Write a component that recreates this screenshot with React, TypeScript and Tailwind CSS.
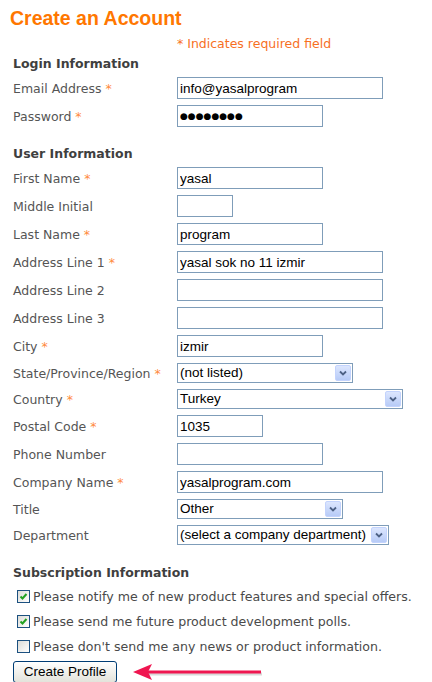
import React from 'react';

const labelFont = { fontFamily: '"DejaVu Sans", Verdana, sans-serif' };
const inputFont = { fontFamily: '"Liberation Sans", Arial, sans-serif' };

type Row =
  | { kind: 'input'; label: string; req?: boolean; value?: string; width: string; password?: boolean }
  | { kind: 'select'; label: string; req?: boolean; value: string; width: string };

const loginRows: Row[] = [
  { kind: 'input', label: 'Email Address', req: true, value: 'info@yasalprogram', width: 'w-[206px]' },
  { kind: 'input', label: 'Password', req: true, value: '●●●●●●●●', width: 'w-[146px]', password: true },
];

const userRows: Row[] = [
  { kind: 'input', label: 'First Name', req: true, value: 'yasal', width: 'w-[146px]' },
  { kind: 'input', label: 'Middle Initial', value: '', width: 'w-[56px]' },
  { kind: 'input', label: 'Last Name', req: true, value: 'program', width: 'w-[146px]' },
  { kind: 'input', label: 'Address Line 1', req: true, value: 'yasal sok no 11 izmir', width: 'w-[206px]' },
  { kind: 'input', label: 'Address Line 2', value: '', width: 'w-[206px]' },
  { kind: 'input', label: 'Address Line 3', value: '', width: 'w-[206px]' },
  { kind: 'input', label: 'City', req: true, value: 'izmir', width: 'w-[146px]' },
  { kind: 'select', label: 'State/Province/Region', req: true, value: '(not listed)', width: 'w-[176px]' },
  { kind: 'select', label: 'Country', req: true, value: 'Turkey', width: 'w-[226px]' },
  { kind: 'input', label: 'Postal Code', req: true, value: '1035', width: 'w-[86px]' },
  { kind: 'input', label: 'Phone Number', value: '', width: 'w-[146px]' },
  { kind: 'input', label: 'Company Name', req: true, value: 'yasalprogram.com', width: 'w-[206px]' },
  { kind: 'select', label: 'Title', value: 'Other', width: 'w-[166px]' },
  { kind: 'select', label: 'Department', value: '(select a company department)', width: 'w-[212px]' },
];

function Label({ text, req }: { text: string; req?: boolean }) {
  return (
    <div className="w-[164px] shrink-0 pt-[1px] text-[12.5px] leading-[18px] text-[#555555]" style={labelFont}>
      {text}
      {req && <span className="text-[#ff8a3d]"> *</span>}
    </div>
  );
}

function Chevron() {
  return (
    <div className="absolute right-[1px] top-[1px] bottom-[1px] w-[16px] rounded-[2px] border border-[#c3d3fd] bg-gradient-to-b from-[#dce6fe] to-[#b7cbf7] flex items-center justify-center">
      <svg width="8" height="6" viewBox="0 0 8 6">
        <path d="M1 1.5 L4 4.5 L7 1.5" fill="none" stroke="#4d6185" strokeWidth="1.8" />
      </svg>
    </div>
  );
}

function FormRow({ row }: { row: Row }) {
  return (
    <div className="flex items-center">
      <Label text={row.label} req={row.req} />
      {row.kind === 'input' ? (
        <input
          readOnly
          value={row.value}
          className={`${row.width} h-[22px] border border-[#7f9db9] bg-white px-[2px] text-black outline-none ${
            row.password ? 'text-[9px]' : 'text-[13.5px]'
          }`}
          style={row.password ? labelFont : inputFont}
        />
      ) : (
        <div className={`relative ${row.width} h-[20px] border border-[#7f9db9] bg-white`}>
          <div className="pl-[2px] text-[13.5px] leading-[18px] text-black whitespace-nowrap" style={inputFont}>
            {row.value}
          </div>
          <Chevron />
        </div>
      )}
    </div>
  );
}

function Heading({ children, className }: { children: React.ReactNode; className: string }) {
  return (
    <div className={`pt-[1px] text-[12.5px] leading-[18px] font-bold text-[#3f3f3f] ${className}`} style={labelFont}>
      {children}
    </div>
  );
}

function Check({ checked, text }: { checked: boolean; text: string }) {
  return (
    <div className="flex items-center h-[25px] pl-[4px] gap-[3px]">
      <div className="w-[13px] h-[13px] border border-[#1c5180] bg-gradient-to-br from-[#dcdcd7] to-white flex items-center justify-center">
        {checked && (
          <svg width="9" height="9" viewBox="0 0 9 9">
            <path d="M1.5 4.5 L3.5 6.5 L7.5 2" fill="none" stroke="#21a121" strokeWidth="2" />
          </svg>
        )}
      </div>
      <span className="text-[12.6px] leading-[18px] text-[#4a4a4a] whitespace-nowrap" style={labelFont}>
        {text}
      </span>
    </div>
  );
}

export default function App() {
  return (
    <div className="w-[432px] h-[682px] overflow-hidden bg-white px-[13px]">
      <h1 className="-ml-[3px] pt-[7px] text-[19.5px] leading-[22px] font-bold text-[#ff7700]" style={inputFont}>
        Create an Account
      </h1>
      <div className="mt-[5px] pl-[164px] pt-[1px] text-[12.5px] leading-[18px] text-[#f7701f]" style={labelFont}>
        * Indicates required field
      </div>

      <Heading className="mt-[1px] mb-[4px]">Login Information</Heading>
      <div className="flex flex-col gap-[6px]">
        {loginRows.map(r => (
          <FormRow key={r.label} row={r} />
        ))}
      </div>

      <Heading className="mt-[17px] mb-[4px]">User Information</Heading>
      <div className="flex flex-col gap-[6px]">
        {userRows.map(r => (
          <FormRow key={r.label} row={r} />
        ))}
      </div>

      <Heading className="mt-[18px] mb-[2px]">Subscription Information</Heading>
      <Check checked text="Please notify me of new product features and special offers." />
      <Check checked text="Please send me future product development polls." />
      <Check checked={false} text="Please don't send me any news or product information." />

      <div className="mt-[2px] flex items-center">
        <button
          className="w-[104px] h-[22px] rounded-[3px] border border-[#003c74] bg-gradient-to-b from-white to-[#e3e3db] text-[13.5px] text-black"
          style={inputFont}
        >
          Create Profile
        </button>
        <svg width="132" height="20" viewBox="0 0 132 20" className="ml-[15px] mt-[2px]">
          <line x1="16" y1="11" x2="130" y2="11" stroke="#d9d9d9" strokeWidth="3" />
          <line x1="14" y1="9" x2="129" y2="9" stroke="#ef1650" strokeWidth="3" />
          <path d="M1 9 L20 1 L16 9 L20 17 Z" fill="#ef1650" />
        </svg>
      </div>
    </div>
  );
}
